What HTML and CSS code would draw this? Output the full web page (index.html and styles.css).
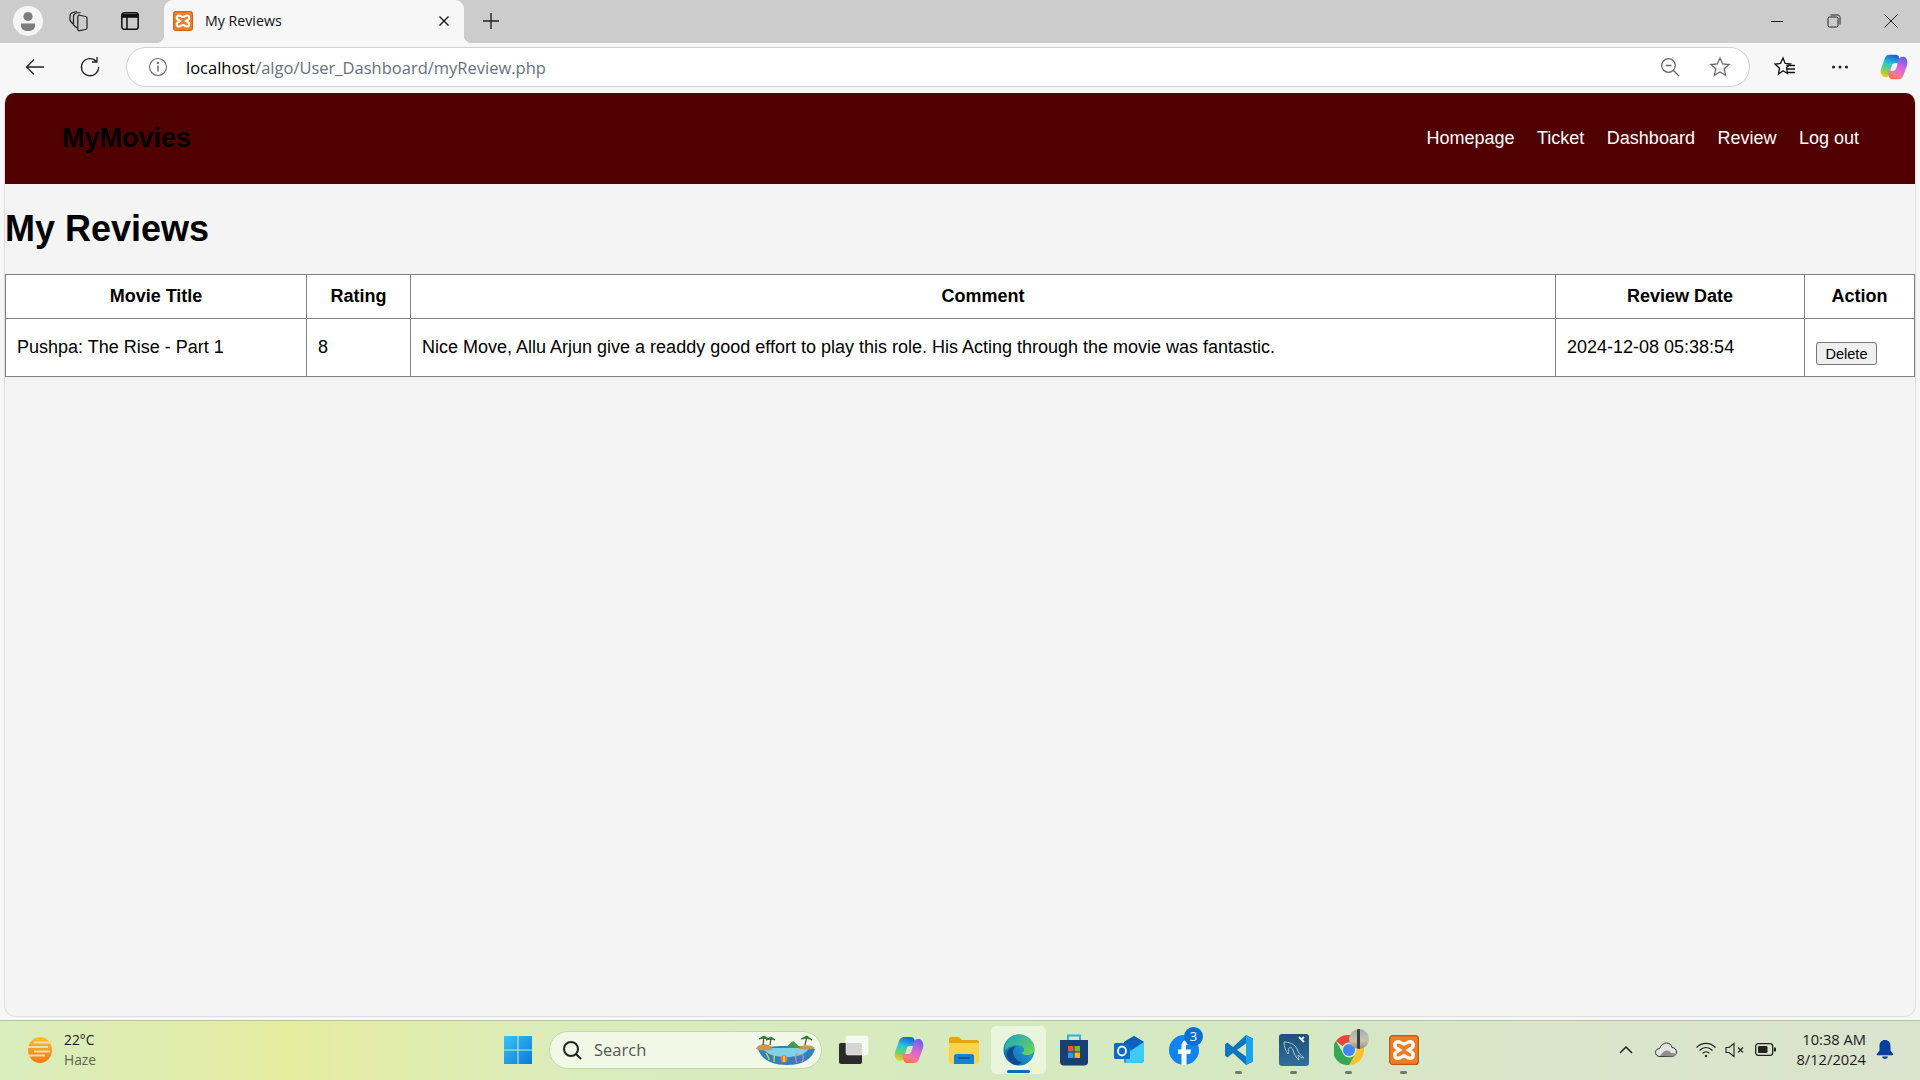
FILE: index.html
```html
<!DOCTYPE html>
<html lang="en">
<head>
  <meta charset="UTF-8" />
  <title>My Reviews</title>
  <link rel="stylesheet" href="styles.css">
</head>
<body>
  <div class="tabstrip">
    <div class="profile">
      <svg width="30" height="30" viewBox="0 0 30 30"><circle cx="15" cy="15" r="15" fill="#f5f5f5"/><circle cx="15" cy="10.5" r="4.6" fill="#7d7d7d"/><path d="M8 17.5h14v2.5c0 3-3 5-7 5s-7-2-7-5z" fill="#7d7d7d"/></svg>
    </div>
    <div class="strip-btn">
      <svg width="22" height="22" viewBox="0 0 22 22" fill="none" stroke="#222" stroke-width="1.200"><path d="M11.500 5l7 1.500c1 .2 1.500.8 1.500 1.700v9.800c0 1-.7 1.300-1.500 1.500l-6 1.200c-1 .2-1.700-.4-1.700-1.500V7c0-1 .7-2.200 1.700-2z"/><path d="M10 18l-3.500-3V6.500c0-1.500 1-3 3-3.500l4-.5"/><path d="M6 14L3 10.500V6c0-1.500 1-3 3-3.500l4-1"/></svg>
    </div>
    <div class="strip-btn">
      <svg width="20" height="20" viewBox="0 0 20 20" fill="none" stroke="#111" stroke-width="1.500"><rect x="1.800" y="1.800" width="16.400" height="16.400" rx="2.500"/><path d="M1.800 4.800h16.400" stroke-width="4"/><path d="M7 6v12"/></svg>
    </div>
    <div class="tab">
      <svg class="tab-icon" width="20" height="20" viewBox="0 0 20 20"><rect x=".5" y=".5" width="19" height="19" rx="2" fill="#ee7d24" stroke="#c8651a"/><path d="M6 4.500C3.500 4.500 3 8 5.500 9L7 10l-1.500 1C3 12 3.500 15.500 6 15.500c2 0 2.500-1.500 4-1.500s2 1.500 4 1.500c2.500 0 3-3.500.5-4.500L13 10l1.500-1c2.500-1 2-4.500-.5-4.500-2 0-2.500 1.500-4 1.500S8 4.500 6 4.500z" fill="none" stroke="#fff" stroke-width="2.200"/></svg>
      <span class="tab-title">My Reviews</span>
      <svg class="tab-close" width="12" height="12" viewBox="0 0 12 12" stroke="#111" stroke-width="1.300"><path d="M1.500 1.500l9 9M10.500 1.500l-9 9"/></svg>
    </div>
    <svg class="new-tab" width="18" height="18" viewBox="0 0 18 18" stroke="#222" stroke-width="1.400"><path d="M9 1v16M1 9h16"/></svg>
    <div class="window-controls">
      <svg width="14" height="14" viewBox="0 0 14 14" stroke="#222" stroke-width="1"><path d="M1 7.500h12"/></svg>
      <svg width="14" height="14" viewBox="0 0 14 14" fill="none" stroke="#222" stroke-width="1"><rect x="1" y="3" width="10" height="10" rx="1.500"/><path d="M3.500 1h7.500c1 0 2 1 2 2v7.500"/></svg>
      <svg width="14" height="14" viewBox="0 0 14 14" stroke="#222" stroke-width="1"><path d="M.5.500l13 13M13.500.500l-13 13"/></svg>
    </div>
  </div>

  <div class="toolbar">
    <svg class="tool-back" width="20" height="20" viewBox="0 0 20 20" fill="none" stroke="#222" stroke-width="1.300"><path d="M19 10H1.500M9 2.500L1.500 10 9 17.500"/></svg>
    <svg class="tool-reload" width="22" height="22" viewBox="0 0 22 22" fill="none" stroke="#222" stroke-width="1.300"><path d="M17.500 5.500A8.600 8.600 0 1 0 19.600 11"/><path d="M18 1v5h-5"/></svg>
    <div class="address">
      <svg width="20" height="20" viewBox="0 0 20 20" fill="none" stroke="#666" stroke-width="1.100"><circle cx="10" cy="10" r="8.500"/><path d="M10 8.500v6" stroke-width="1.400"/><circle cx="10" cy="6" r=".6"/></svg>
      <div class="url"><span class="url-host">localhost</span>/algo/User_Dashboard/myReview.php</div>
      <svg class="addr-zoom" width="20" height="20" viewBox="0 0 20 20" fill="none" stroke="#666" stroke-width="1.300"><circle cx="8.500" cy="8.500" r="6.800"/><path d="M5.500 8.500h6M13.500 13.500l5.500 5.500"/></svg>
      <svg class="addr-star" width="22" height="22" viewBox="0 0 22 22" fill="none" stroke="#666" stroke-width="1.300"><path d="M11 2l2.700 6 6.300.6-4.800 4.200 1.400 6.400L11 16l-5.600 3.200 1.400-6.400L2 8.600 8.300 8z"/></svg>
    </div>
    <svg class="tool-favs" width="22" height="22" viewBox="0 0 22 22" fill="none" stroke="#111" stroke-width="1.300"><path d="M9 2l2.200 5.500 5.300.5-4 3.500 1 6-4.500-2.800L4.500 18l1-5.800L1 8l5.500-.5z"/><path d="M12.500 9.500H21M13 13h8M13 16.500h8"/></svg>
    <svg class="tool-more" width="18" height="6" viewBox="0 0 18 6" fill="#222"><circle cx="2.500" cy="3" r="1.500"/><circle cx="9" cy="3" r="1.500"/><circle cx="15.500" cy="3" r="1.500"/></svg>
    <svg class="tool-copilot" width="28" height="28" viewBox="0 0 30 28"><defs><linearGradient id="cpA" x1="0.600" y1="0" x2="0.300" y2="1"><stop offset="0" stop-color="#1c62d8"/><stop offset=".4" stop-color="#2bc4d8"/><stop offset=".75" stop-color="#7fd05a"/><stop offset="1" stop-color="#f5c92f"/></linearGradient><linearGradient id="cpB" x1="0.700" y1="0" x2="0.300" y2="1"><stop offset="0" stop-color="#6a62e8"/><stop offset=".45" stop-color="#d564d8"/><stop offset=".8" stop-color="#f7789a"/><stop offset="1" stop-color="#f2762c"/></linearGradient></defs><path d="M10 1h7c2 0 3 1 3.500 3l1.500 6h-6c-2 0-3 1-3.500 3L10 22c-.5 2-2 3-4 3H4c-3-2-4-5-3-9L5 5c1-3 3-4 5-4z" fill="url(#cpA)"/><path d="M20 27h-7c-2 0-3-1-3.500-3L8 18h6c2 0 3-1 3.500-3L20 6c.5-2 2-3 4-3h2c3 2 4 5 3 9l-4 11c-1 3-3 4-5 4z" fill="url(#cpB)"/></svg>
  </div>

  <div class="page">
    <nav class="navbar">
      <div class="brand">MyMovies</div>
      <div class="nav-links">
        <a href="#">Homepage</a>
        <a href="#">Ticket</a>
        <a href="#">Dashboard</a>
        <a href="#">Review</a>
        <a href="#">Log out</a>
      </div>
    </nav>

    <h1>My Reviews</h1>

    <table>
      <thead>
        <tr>
          <th class="col-title">Movie Title</th>
          <th class="col-rating">Rating</th>
          <th class="col-comment">Comment</th>
          <th class="col-date">Review Date</th>
          <th>Action</th>
        </tr>
      </thead>
      <tbody>
        <tr>
          <td>Pushpa: The Rise - Part 1</td>
          <td>8</td>
          <td>Nice Move, Allu Arjun give a readdy good effort to play this role. His Acting through the movie was fantastic.</td>
          <td>2024-12-08 05:38:54</td>
          <td><button class="delete-btn">Delete</button></td>
        </tr>
      </tbody>
    </table>
  </div>

  <div class="taskbar">
    <div class="weather">
      <svg width="28" height="28" viewBox="0 0 28 28"><defs><linearGradient id="sun" x1="0" y1="0" x2="0" y2="1"><stop offset="0" stop-color="#fbc02d"/><stop offset="1" stop-color="#ee7b12"/></linearGradient></defs><ellipse cx="14" cy="14" rx="12" ry="13" fill="url(#sun)"/><path d="M8 6.500h18M2 11h20M8 15.500h16M1 19.500h18" stroke="#ecdcaf" stroke-width="2.200"/></svg>
      <div class="weather-text">
        <div>22°C</div>
        <div class="weather-sub">Haze</div>
      </div>
    </div>

    <div class="task-icon">
      <svg width="30" height="30" viewBox="0 0 30 30"><defs><linearGradient id="win" x1="0" y1="0" x2="1" y2="1"><stop offset="0" stop-color="#38c4f5"/><stop offset="1" stop-color="#0a78d8"/></linearGradient></defs><path d="M1 1h13.500v13.500H1zM15.500 1H29v13.500H15.500zM1 15.500h13.500V29H1zM15.500 15.500H29V29H15.500z" fill="url(#win)"/></svg>
    </div>

    <div class="search">
      <svg width="22" height="22" viewBox="0 0 22 22" fill="none" stroke="#222" stroke-width="2"><circle cx="10" cy="10" r="7"/><path d="M15 15l5 5"/></svg>
      <span class="search-text">Search</span>
      <svg class="search-art" width="64" height="30" viewBox="0 0 62 30"><path d="M3 14c8-4 50-4 57 0-3 10-12 16-28 16S6 24 3 14z" fill="#2a83c4"/><path d="M8 13h46c-3 7-14 9-23 9S11 20 8 13z" fill="#7fd3e6"/><path d="M1 14c1-4 8-6 13-4l4 4c-6 2-12 2-17 0zM42 13c2-3 14-4 18 0-5 2-13 2-18 0z" fill="#c99a55"/><path d="M8 10l1-8M15 10l1-7M50 10l2-9" stroke="#5b4420" stroke-width="1.200"/><path d="M4 4l5-3 5 3-5-1zM11 5l5-3 4 3-4-1zM46 4l6-3 5 4-5-2z" fill="#2f7a3a" stroke="#2f7a3a"/><path d="M30 13l8-7 8 7z" fill="#3f9a52"/><circle cx="29" cy="24" r="3.500" fill="#f27a1a"/><path d="M29 21v6" stroke="#fff"/><path d="M42 28c-2-4-2-7 0-9M47 27c2-4 2-6 0-8" stroke="#ee6fa5" stroke-width="1.500" fill="none"/><path d="M14 25c0-3-2-5-3-7M19 27c0-3 0-6 1-8" stroke="#e0c93a" stroke-width="1.500" fill="none"/></svg>
    </div>

    <div class="task-icon">
      <svg width="32" height="30" viewBox="0 0 32 30"><rect x="1" y="8" width="23" height="21" rx="2" fill="#2b2b2b"/><rect x="8" y="1" width="22" height="19" rx="2" fill="#fbfbfb" fill-opacity=".82" stroke="#ffffff" stroke-opacity=".5"/></svg>
    </div>
    <div class="task-icon">
      <svg width="30" height="28" viewBox="0 0 30 28"><path d="M10 1h7c2 0 3 1 3.500 3l1.500 6h-6c-2 0-3 1-3.500 3L10 22c-.5 2-2 3-4 3H4c-3-2-4-5-3-9L5 5c1-3 3-4 5-4z" fill="url(#cpA)"/><path d="M20 27h-7c-2 0-3-1-3.500-3L8 18h6c2 0 3-1 3.500-3L20 6c.5-2 2-3 4-3h2c3 2 4 5 3 9l-4 11c-1 3-3 4-5 4z" fill="url(#cpB)"/></svg>
    </div>
    <div class="task-icon">
      <svg width="30" height="28" viewBox="0 0 30 28"><path d="M0 3c0-1 1-2 2-2h8l3 3h15c1 0 2 1 2 2v3H0z" fill="#e5a70b"/><path d="M0 7h30v19c0 1-1 2-2 2H2c-1 0-2-1-2-2z" fill="#fcd34f"/><path d="M5 20c0-1 1-2 2-2h16c1 0 2 1 2 2v8H5z" fill="#1382d0"/><path d="M9 22h12" stroke="#0b4f8e" stroke-width="1.500"/></svg>
    </div>
    <div class="task-icon is-active">
      <svg width="32" height="32" viewBox="0 0 32 32"><defs><linearGradient id="edgeA" x1="0" y1="1" x2="1" y2="0"><stop offset="0" stop-color="#0d5fa8"/><stop offset="1" stop-color="#2fb6e2"/></linearGradient><linearGradient id="edgeB" x1="0" y1="0" x2="1" y2="1"><stop offset="0" stop-color="#18a5c8"/><stop offset="1" stop-color="#74d64c"/></linearGradient></defs><circle cx="16" cy="16" r="15.500" fill="url(#edgeA)"/><path d="M2 12C4 5 10 .5 16 .500c9 0 15.500 7 15.500 14 0 5-4 6.500-7.500 6.500-3 0-5.500-1-5.500-2.500 2-.5 3-2 2.500-4-1-3-5-4-8-3.500C8 12 3.500 13.500 2 17z" fill="url(#edgeB)"/><path d="M10 18c0 5 4 9.500 9 10.500-2 1.500-4.500 3-7 2.500C7 29 3.500 24 3.800 19 5 14.500 9 12.500 13 12.500c-2 1-3 3-3 5.500z" fill="#0c4b8f"/></svg>
    </div>
    <div class="task-icon">
      <svg width="30" height="32" viewBox="0 0 30 32"><path d="M9 6V1.500h12V6" fill="none" stroke="#2dafe6" stroke-width="2"/><path d="M1 6h28v22c0 2-1.500 3.500-3.500 3.500h-21C2.500 31.500 1 30 1 28z" fill="#173f73"/><path d="M9 12h5.500v5.500H9z" fill="#f2542d"/><path d="M15.500 12H21v5.500h-5.500z" fill="#7eb92a"/><path d="M9 18.500h5.500V24H9z" fill="#1da1e2"/><path d="M15.500 18.500H21V24h-5.500z" fill="#fcb712"/></svg>
    </div>
    <div class="task-icon">
      <svg width="30" height="30" viewBox="0 0 30 30"><path d="M10 7l10-6 10 6v18c0 2-1 3-3 3H12c-2 0-2-1-2-3z" fill="#1b9de2"/><path d="M20 1l10 6-12 8-8-4V7z" fill="#0f5fb5"/><path d="M12 19l18-12v18c0 2-1 3-3 3H12z" fill="#3ecbf2"/><rect x="0" y="8" width="16" height="16" rx="1.500" fill="#0a6bc4"/><ellipse cx="8" cy="16" rx="4" ry="4.500" fill="none" stroke="#fff" stroke-width="1.800"/></svg>
    </div>
    <div class="task-icon">
      <svg width="30" height="30" viewBox="0 0 30 30"><circle cx="15" cy="15" r="15" fill="#0f84f0"/><path d="M12.500 30V19H9v-4.500h3.500V11c0-4 2.400-6 6-6 1.500 0 2.700.2 3 .2v4h-2.300c-1.900 0-2.200 1-2.200 2.300v3H22l-.7 4.500h-3.800v11z" fill="#fff"/></svg>
      <span class="fb-badge">3</span>
    </div>
    <div class="task-icon">
      <svg width="30" height="32" viewBox="0 0 30 32"><path d="M22 1l7 3.500v23L22 31 9 19l-5.500 4.500L1 21.500V10.500L3.500 8.500 9 13z" fill="#0f75bd"/><path d="M22 1l7 3.500v23L22 31z" fill="#1ea2ec"/><path d="M22 9.500L13 16l9 6.500z" fill="#d4e9c1"/></svg>
      <span class="running"></span>
    </div>
    <div class="task-icon">
      <svg width="30" height="32" viewBox="0 0 30 32"><defs><linearGradient id="sql" x1="0" y1="0" x2="0" y2="1"><stop offset="0" stop-color="#1f5078"/><stop offset="1" stop-color="#2f6f9c"/></linearGradient></defs><rect width="30" height="32" rx="3" fill="url(#sql)"/><path d="M5 8c5 0 11 2 13 7 1 3 3 6 7 9-3 0-5-2-6-3 0 2 1 4 1 5-3-2-5-6-6-10-1-3-3-3-4-2-1 2 0 5-1 6-2-3-4-7-4-12z" fill="none" stroke="#aac3d2" stroke-width="1"/><path d="M20 3l5 5M25 3l-2 2" stroke="#e6eef3" stroke-width="1.800"/></svg>
      <span class="running"></span>
    </div>
    <div class="task-icon">
      <svg width="30" height="30" viewBox="0 0 30 30"><path d="M15 0a15 15 0 0 1 13 7.500H15a7.500 7.500 0 0 0-6.500 3.800L2 6A15 15 0 0 1 15 0z" fill="#e8453c"/><path d="M28 7.500A15 15 0 0 1 15 30l6.500-11.300A7.500 7.500 0 0 0 21.500 11z" fill="#fbc02d"/><path d="M2 6l6.500 11.300A7.500 7.500 0 0 0 15 22.500a7 7 0 0 0 6.500-3.800L15 30A15 15 0 0 1 2 6z" fill="#34a853"/><circle cx="15" cy="15" r="6" fill="#4385f4"/></svg>
      <span class="chrome-profile"></span>
      <span class="running"></span>
    </div>
    <div class="task-icon">
      <svg width="30" height="30" viewBox="0 0 20 20"><rect x=".4" y=".4" width="19.200" height="19.200" rx="2" fill="#ee7d24" stroke="#b85a14" stroke-width=".8"/><path d="M6 4.500C3.500 4.500 3 8 5.500 9L7 10l-1.500 1C3 12 3.500 15.500 6 15.500c2 0 2.500-1.500 4-1.500s2 1.500 4 1.500c2.500 0 3-3.500.5-4.500L13 10l1.500-1c2.500-1 2-4.500-.5-4.500-2 0-2.500 1.500-4 1.500S8 4.500 6 4.500z" fill="none" stroke="#fff" stroke-width="2.200"/></svg>
      <span class="running"></span>
    </div>

    <div class="tray">
      <svg class="tray-chevron" width="14" height="8" viewBox="0 0 14 8" fill="none" stroke="#222" stroke-width="1.500"><path d="M1 7l6-6 6 6"/></svg>
      <svg class="tray-cloud" width="22" height="15" viewBox="0 0 22 15"><path d="M5 14.500c-3 0-4.500-2-4.500-4 0-2.500 2-4 4-4C6 3 8.500 1 11.500 1c3 0 5 2 5.500 4.500 2.500 0 4.500 2 4.500 4.500s-2 4.500-4.500 4.500z" fill="#e4e4e0" stroke="#333" stroke-width="1"/><path d="M5 14c4-6 8-7 11-3 2 0 4 .5 5 1-1 2-2 2.500-4 2.500z" fill="#8e8e8e"/></svg>
      <svg class="tray-wifi" width="20" height="16" viewBox="0 0 20 16" fill="none" stroke="#222" stroke-width="1.200"><path d="M.5 5.500c5.500-5.500 13.500-5.500 19 0M3.500 8.500c4-4 9-4 13 0M6.500 11.300c2-2 5-2 7 0"/><circle cx="10" cy="14" r="1.200" fill="#222" stroke="none"/></svg>
      <svg class="tray-sound" width="20" height="16" viewBox="0 0 20 16" fill="none" stroke="#222" stroke-width="1.100"><path d="M1 5.500h3L9 1.500v13l-5-4H1z"/><path d="M13 5.500l5 5M18 5.500l-5 5"/></svg>
      <svg class="tray-battery" width="21" height="13" viewBox="0 0 21 13"><rect x=".7" y=".7" width="17" height="11.600" rx="2.500" fill="none" stroke="#222" stroke-width="1.300"/><rect x="3" y="3" width="9.500" height="7" rx="1" fill="#222"/><path d="M19 4.500h1c.5 0 1 .5 1 1v2c0 .5-.5 1-1 1h-1z" fill="#222"/></svg>
      <div class="clock">
        <div>10:38 AM</div>
        <div>8/12/2024</div>
      </div>
      <svg class="tray-bell" width="18" height="20" viewBox="0 0 18 20" fill="#0a3f9e"><path d="M9 0c-3.500 0-5.500 2.500-5.500 6v4.500L.8 14c-.4.600 0 1.200.7 1.200h15c.7 0 1.100-.6.7-1.200l-2.700-3.500V6C14.500 2.500 12.500 0 9 0z"/><path d="M6 16.500h6c-.4 1.600-1.500 2.500-3 2.500s-2.600-.9-3-2.500z"/></svg>
    </div>
  </div>
</body>
</html>
```

FILE: styles.css
```css
* {
  box-sizing: border-box;
  margin: 0;
  padding: 0;
}

html, body {
  height: 100%;
}

body {
  display: flex;
  flex-direction: column;
  height: 1080px;
  overflow: hidden;
  background: #f7f7f7;
  font-family: 'Liberation Sans', Arial, sans-serif;
}

/* browser frame */
.tabstrip {
  display: flex;
  align-items: center;
  flex: 0 0 43px;
  padding-bottom: 2px;
  background: #cccccc;
}

.profile {
  display: flex;
  margin-left: 13px;
  width: 41px;
}

.strip-btn {
  display: flex;
  justify-content: center;
  width: 53px;
  margin-left: -3px;
}

.strip-btn + .strip-btn {
  margin-left: 0;
  width: 52px;
}

.tab {
  position: relative;
  display: flex;
  align-items: center;
  align-self: flex-end;
  width: 300px;
  height: 43px;
  margin-left: 8px;
  margin-bottom: -2px;
  padding: 0 14px 2px 9px;
  background: #f7f7f7;
  border-radius: 9px 9px 0 0;
}

.tab::before,
.tab::after {
  content: '';
  position: absolute;
  bottom: 0;
  width: 8px;
  height: 8px;
}

.tab::before {
  left: -8px;
  background: radial-gradient(circle at 0 0, transparent 8px, #f7f7f7 8.500px);
}

.tab::after {
  right: -8px;
  background: radial-gradient(circle at 100% 0, transparent 8px, #f7f7f7 8.500px);
}

.tab-title {
  margin-left: 12px;
  font-family: 'Open Sans', sans-serif;
  font-size: 14.200px;
  color: #111;
}

.tab-close {
  margin-left: auto;
}

.new-tab {
  margin-left: 18px;
}

.window-controls {
  display: flex;
  gap: 43px;
  margin-left: auto;
  margin-right: 22px;
}

.toolbar {
  display: flex;
  align-items: center;
  flex: 0 0 50px;
  padding-bottom: 2px;
  background: #f7f7f7;
}

.tool-back {
  margin-left: 25px;
}

.tool-reload {
  margin-left: 34px;
}

.address {
  display: flex;
  align-items: center;
  width: 1624px;
  height: 40px;
  margin-left: 25px;
  padding: 0 18px 0 21px;
  background: #fff;
  border: 1px solid #d0d0d0;
  border-radius: 20px;
}

.url {
  margin-left: 18px;
  font-family: 'Open Sans', sans-serif;
  font-size: 16.500px;
  color: #67707a;
}

.url-host {
  color: #000;
}

.addr-zoom {
  margin-left: auto;
}

.addr-star {
  margin-left: 29px;
}

.tool-favs {
  margin-left: 24px;
}

.tool-more {
  margin-left: 35px;
}

.tool-copilot {
  margin-left: 31px;
}

/* the page itself */
.page {
  flex: 0 0 924px;
  margin: 0 4px;
  background: #f4f4f4;
  border: 1px solid #dedede;
  border-top: 0;
  border-radius: 10px 10px 12px 12px;
  overflow: hidden;
}

.navbar {
  display: flex;
  align-items: center;
  justify-content: space-between;
  height: 91px;
  padding: 0 56px 0 57px;
  background: #500000;
}

.brand {
  font-size: 27px;
  font-weight: 700;
  color: #000;
}

.nav-links {
  display: flex;
  gap: 22.500px;
}

.nav-links a {
  font-size: 18px;
  color: #fff;
  text-decoration: none;
}

h1 {
  margin: 24px 0 25px;
  font-size: 36px;
  font-weight: 700;
  line-height: 41px;
  color: #000;
}

table {
  width: 100%;
  table-layout: fixed;
  border-collapse: collapse;
  background: #fff;
  font-size: 18px;
  color: #000;
}

th, td {
  padding: 11px;
  border: 1px solid #808080;
  text-align: left;
  font-weight: 400;
  line-height: 21px;
}

th {
  text-align: center;
  font-weight: 700;
}

.col-title {
  width: 301px;
}

.col-rating {
  width: 104px;
}

.col-comment {
  width: 1145px;
}

.col-date {
  width: 249px;
}

.delete-btn {
  display: block;
  width: 61px;
  height: 23px;
  margin-top: 12px;
  font-family: 'Liberation Sans', Arial, sans-serif;
  font-size: 14.500px;
  color: #000;
  background: #efefef;
  border: 1px solid #767676;
  border-radius: 3px;
}

/* windows taskbar */
.taskbar {
  display: flex;
  align-items: center;
  flex: 0 0 60px;
  margin-top: 3px;
  padding-bottom: 2px;
  background: linear-gradient(90deg, #d9edbe 0%, #e6eca0 15%, #d9ecbc 30%, #d4e9c1 60%, #d9e6c9 80%, #dae3ce 100%);
  border-top: 1px solid #b6c2a6;
}

.weather {
  display: flex;
  align-items: center;
  width: 490px;
  padding-left: 26px;
}

.weather-text {
  margin-left: 10px;
  font-family: 'Open Sans', sans-serif;
  font-size: 13.800px;
  line-height: 20px;
  color: #1a1a1a;
}

.weather-sub {
  color: #5a6350;
}

.task-icon {
  position: relative;
  display: flex;
  align-items: center;
  justify-content: center;
  flex: 0 0 55px;
  height: 48px;
}

.is-active {
  background: #e9f5dc;
  border-radius: 5px;
}

.is-active::after {
  content: '';
  position: absolute;
  left: 16px;
  bottom: 1px;
  width: 23px;
  height: 3px;
  background: #0f6cbd;
  border-radius: 2px;
}

.running {
  position: absolute;
  left: 24px;
  bottom: 0;
  width: 7px;
  height: 3px;
  background: #6f7868;
  border-radius: 2px;
}

.fb-badge {
  position: absolute;
  top: 1px;
  right: 8px;
  width: 19px;
  height: 19px;
  font-family: 'Open Sans', sans-serif;
  font-size: 13px;
  line-height: 19px;
  text-align: center;
  color: #fff;
  background: #0b6fd0;
  border-radius: 50%;
}

.chrome-profile {
  position: absolute;
  top: 3px;
  right: 7px;
  width: 20px;
  height: 20px;
  background: linear-gradient(90deg, transparent 8px, #3e3e3e 8px, #3e3e3e 11px, transparent 11px), linear-gradient(180deg, #a3aeb4, #c8c2ac 60%, #8e8c7c);
  border-radius: 50%;
}

.search {
  display: flex;
  align-items: center;
  flex: 0 0 273px;
  height: 38px;
  margin: 0 4px;
  padding: 0 3px 0 11px;
  background: #f1f8e6;
  border: 1px solid #c5d6ad;
  border-radius: 19px;
}

.search-text {
  margin-left: 11px;
  font-family: 'Open Sans', sans-serif;
  font-size: 16.500px;
  color: #555;
}

.search-art {
  margin-left: auto;
}

.tray {
  display: flex;
  align-items: center;
  margin-left: auto;
  padding-right: 26px;
}

.tray-cloud {
  margin-left: 22px;
}

.tray-wifi {
  margin-left: 19px;
}

.tray-sound {
  margin-left: 9px;
}

.tray-battery {
  margin-left: 10px;
}

.clock {
  margin-left: 20px;
  padding-bottom: 2px;
  font-family: 'Open Sans', sans-serif;
  font-size: 14.700px;
  line-height: 20px;
  text-align: right;
  color: #1a1a1a;
}

.tray-bell {
  margin-left: 10px;
}
```
